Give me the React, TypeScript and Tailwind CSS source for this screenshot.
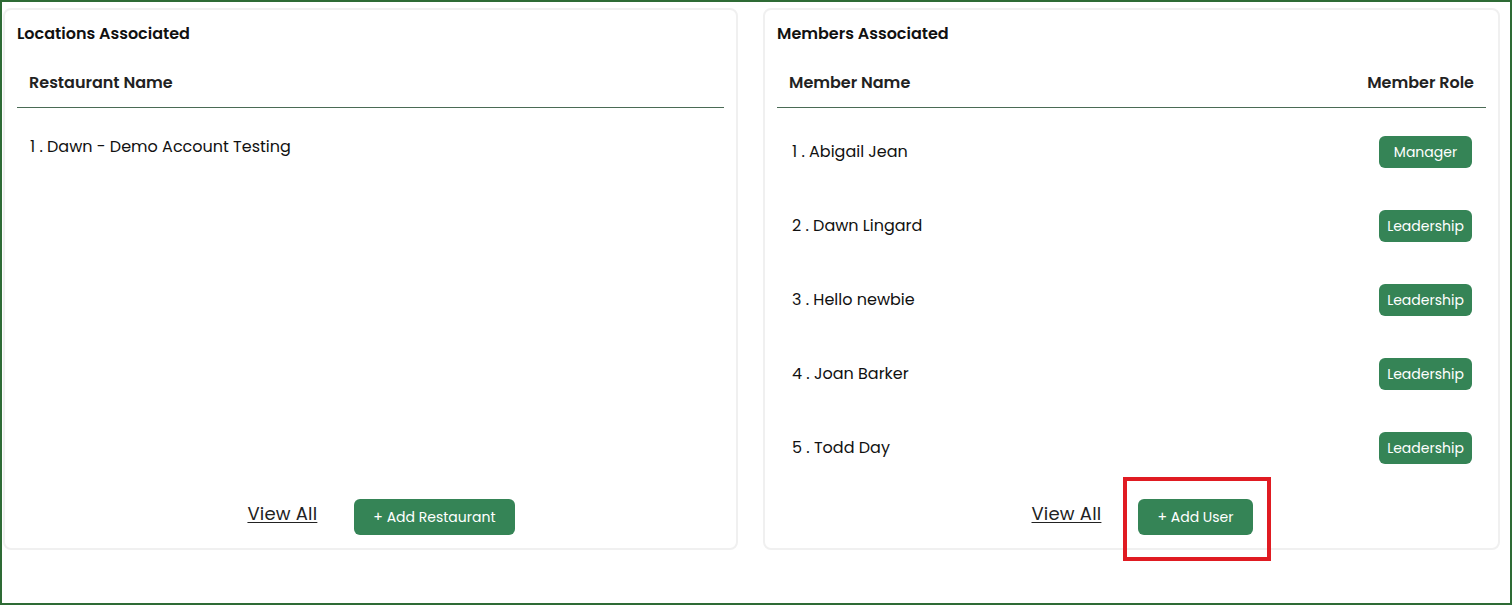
import React from "react";

const members = [
  { name: "Abigail Jean", role: "Manager" },
  { name: "Dawn Lingard", role: "Leadership" },
  { name: "Hello newbie", role: "Leadership" },
  { name: "Joan Barker", role: "Leadership" },
  { name: "Todd Day", role: "Leadership" },
];

function Footer({ label }: { label: string }) {
  return (
    <div className="mt-auto flex items-center justify-center gap-[37px] pb-[13px] pl-[21px]">
      <a href="#" className="mb-[6px] text-[18px] leading-[24px] tracking-[0.2px] text-[#222] underline underline-offset-2">
        View All
      </a>
      <button className="h-9 rounded-md bg-[#358456] px-[19px] text-[14px] text-white">
        + {label}
      </button>
    </div>
  );
}

export default function App() {
  return (
    <div
      className="relative flex h-[605px] w-[1512px] gap-[25px] border-2 border-[#2e6b35] bg-white pl-px pr-[10px] pt-[6px] text-[#111]"
      style={{ fontFamily: "Poppins, Inter, 'Noto Sans', sans-serif" }}
    >
      {/* locations */}
      <div className="flex h-[542px] w-[735px] flex-col rounded-lg border-2 border-[#f0f0f0] px-3 pt-[14px]">
        <h2 className="text-[16px] font-semibold leading-5">Locations Associated</h2>
        <div className="mt-[29px] border-b border-[#4a6b55] px-3 pb-[14px] text-[16px] font-semibold leading-5 text-[#222]">
          Restaurant Name
        </div>
        <div className="mt-[27px] pl-[13px] text-[16px] leading-6">1 . Dawn - Demo Account Testing</div>
        <Footer label="Add Restaurant" />
      </div>

      {/* members */}
      <div className="flex h-[542px] w-[737px] flex-col rounded-lg border-2 border-[#f0f0f0] px-3 pt-[14px]">
        <h2 className="text-[16px] font-semibold leading-5">Members Associated</h2>
        <div className="mt-[29px] flex justify-between border-b border-[#4a6b55] px-3 pb-[14px] text-[16px] font-semibold leading-5 text-[#222]">
          <span>Member Name</span>
          <span>Member Role</span>
        </div>
        <div className="mt-[7px] flex flex-col">
          {members.map((m, i) => (
            <div key={m.name} className="flex h-[74px] items-center justify-between pl-[15px] pr-[14px]">
              <span className="text-[16px] leading-6">
                {i + 1} . {m.name}
              </span>
              <span className="flex h-8 w-[93px] items-center justify-center rounded-md bg-[#358456] text-[14px] text-white">
                {m.role}
              </span>
            </div>
          ))}
        </div>
        <Footer label="Add User" />
      </div>

      <div className="pointer-events-none absolute left-[1121px] top-[475px] h-[84px] w-[148px] border-4 border-[#e01b22]" />
    </div>
  );
}
